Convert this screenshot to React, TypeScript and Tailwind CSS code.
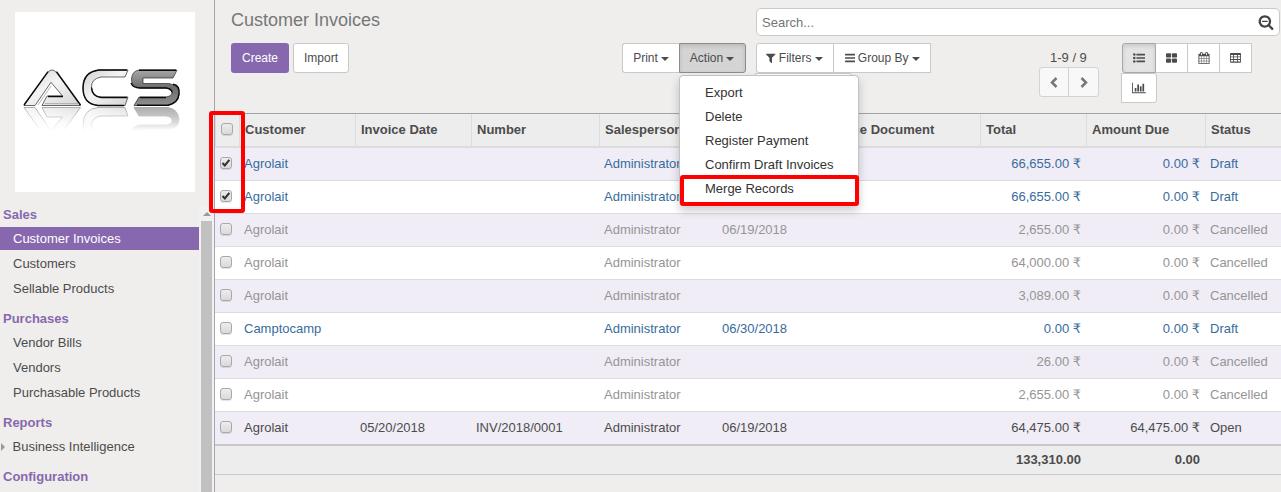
import type { ReactNode } from "react";

const paths = {
  filter:
    "M1403 295q17 41-14 70l-493 493v742q0 42-39 59-13 5-25 5-27 0-45-19l-256-256q-19-19-19-45v-486l-493-493q-31-29-14-70 17-39 59-39h1280q42 0 59 39z",
  calendar:
    "M192 1664h288v-288h-288v288zm352 0h320v-288h-320v288zm-352-352h288v-320h-288v320zm352 0h320v-320h-320v320zm-352-384h288v-288h-288v288zm736 736h320v-288h-320v288zm-384-736h320v-288h-320v288zm768 736h288v-288h-288v288zm-384-352h320v-320h-320v320zm-352-864v-288q0-13-9.5-22.5t-22.5-9.5h-64q-13 0-22.5 9.5t-9.5 22.5v288q0 13 9.5 22.5t22.5 9.5h64q13 0 22.5-9.5t9.5-22.5zm736 864h288v-320h-288v320zm-384-384h320v-288h-320v288zm384 0h288v-288h-288v288zm32-480v-288q0-13-9.5-22.5t-22.5-9.5h-64q-13 0-22.5 9.5t-9.5 22.5v288q0 13 9.5 22.5t22.5 9.5h64q13 0 22.5-9.5t9.5-22.5zm384-64v1280q0 52-38 90t-90 38h-1408q-52 0-90-38t-38-90v-1280q0-52 38-90t90-38h128v-96q0-66 47-113t113-47h64q66 0 113 47t47 113v96h384v-96q0-66 47-113t113-47h64q66 0 113 47t47 113v96h128q52 0 90 38t38 90z",
  chart:
    "M640 896v512h-256v-512h256zm384-512v1024h-256v-1024h256zm1024 1152v128h-2048v-1536h128v1408h1920zm-640-896v768h-256v-768h256zm384-384v1152h-256v-1152h256z",
  searchMinus:
    "M1088 800v64q0 13-9.5 22.5t-22.5 9.5h-576q-13 0-22.5-9.5t-9.5-22.5v-64q0-13 9.5-22.5t22.5-9.5h576q13 0 22.5 9.5t9.5 22.5zm128 32q0-185-131.5-316.5t-316.5-131.5-316.5 131.5-131.5 316.5 131.5 316.5 316.5 131.5 316.5-131.5 131.5-316.5zm512 832q0 53-37.5 90.5t-90.5 37.5q-54 0-90-38l-343-342q-179 124-399 124-143 0-273.5-55.5t-225-150-150-225-55.5-273.5 55.5-273.5 150-225 225-150 273.5-55.5 273.5 55.5 225 150 150 225 55.5 273.5q0 220-124 399l343 343q37 37 37 90z",
  table:
    "M0 256q0-128 128-128h1408q128 0 128 128v1216q0 128-128 128H128q-128 0-128-128zM128 448v224h352V448zM608 448v224h448V448zM1184 448v224h352V448zM128 800v256h352V800zM608 800v256h448V800zM1184 800v256h352V800zM128 1184v256h352v-256zM608 1184v256h448v-256zM1184 1184v256h352v-256z",
};

function Icon({ d, w, className }: { d: string; w: number; className: string }) {
  return (
    <svg viewBox={`0 0 ${w} 1792`} className={className} fill="currentColor" fillRule="evenodd">
      <path d={d} />
    </svg>
  );
}

function Caret() {
  return (
    <svg viewBox="0 0 8 4" className="ml-[3px] mt-[2px] h-1 w-2 shrink-0" fill="currentColor">
      <path d="M0 0h8L4 4z" />
    </svg>
  );
}

function LogoShapes() {
  return (
    <>
      <path fill="url(#pale)" d="M24 105.500L48 72q4-4 8 0l24.500 33.500H42l5-9.500h15.500L51 82.300 35 105.500z" />
      <path fill="url(#pale)" d="M128 70H99q-16 2-16 18t15 17.500h27l3-8.500h-27q-9-1-9.500-9.500t9.500-10.500h24z" />
      <path fill="url(#dark)" d="M177 70h-38q-7 1-7.500 9t8.500 9h26q6 1 6 4.500t-6 4.500h-27l-5 8.500h34q10-2 11-11t-10-11h-26v-5.500h30z" />
    </>
  );
}

function Logo() {
  return (
    <svg viewBox="15 12 180 180" className="ml-[15px] mt-3 h-[180px] w-[180px] shrink-0 bg-white">
      <defs>
        <linearGradient id="pale" x1="0" x2="1" y1="0" y2="1">
          <stop offset="0" stopColor="#cfcfcf" />
          <stop offset=".45" stopColor="#f4f4f4" />
          <stop offset="1" stopColor="#d4d4d4" />
        </linearGradient>
        <linearGradient id="dark" x1="0" x2="0" y1="0" y2="1">
          <stop offset="0" stopColor="#a8a8a8" />
          <stop offset=".5" stopColor="#6c6c6c" />
          <stop offset="1" stopColor="#8e8e8e" />
        </linearGradient>
        <linearGradient id="fade" gradientUnits="userSpaceOnUse" x1="0" x2="0" y1="106" y2="131">
          <stop offset="0" stopColor="#fff" stopOpacity=".75" />
          <stop offset="1" stopColor="#fff" stopOpacity="0" />
        </linearGradient>
        <mask id="fadeMask" maskUnits="userSpaceOnUse" x="15" y="106" width="180" height="25">
          <rect x="15" y="106" width="180" height="25" fill="url(#fade)" />
        </mask>
      </defs>
      <g mask="url(#fadeMask)">
        <g transform="matrix(1 0 0 -1 0 213)" stroke="#777" strokeWidth=".8">
          <LogoShapes />
        </g>
      </g>
      <g stroke="#2a2a2a" strokeWidth=".7" strokeLinejoin="round">
        <LogoShapes />
      </g>
      <path
        d="M24 105L48 71.700M56.500 71.700L80.500 105M63 96.500H48M127 70H99q-16 2-16 18t15 17.500h26M127 97.500h-26q-9-1-9.500-10M176 70.300h-37M131 83q2 5 9 5h26q6 1 6 4.500M166 97.500h-26M137 105.200h31q10-2 11-11t-6-10"
        fill="none"
        stroke="#0a0a0a"
        strokeWidth="1.400"
      />
      <path d="M38 105l13-19M45 103.600h34" fill="none" stroke="#999" strokeWidth=".7" />
    </svg>
  );
}

const menu = [
  { title: "Sales", items: ["Customer Invoices", "Customers", "Sellable Products"] },
  { title: "Purchases", items: ["Vendor Bills", "Vendors", "Purchasable Products"] },
  { title: "Reports", items: ["Business Intelligence"] },
  { title: "Configuration", items: [] },
];

function Sidebar() {
  return (
    <aside className="flex w-[215px] shrink-0 flex-col border-r border-[#a7a5b0]">
      <Logo />
      <div className="mt-[6px] flex min-h-0 flex-1">
        <nav className="w-[199px] shrink-0">
          {menu.map((s) => (
            <section key={s.title}>
              <h2 className="h-[29px] pl-[3px] pt-[5px] font-bold leading-[24px] text-[#8768b0]">{s.title}</h2>
              {s.items.map((it) => (
                <div
                  key={it}
                  className={
                    it === "Customer Invoices"
                      ? "mb-[2px] flex h-[23px] items-center bg-[#8768ae] pl-[13px] text-white"
                      : "mb-[2px] flex h-[23px] items-center pl-[13px]"
                  }
                >
                  {it === "Business Intelligence" && (
                    <svg viewBox="0 0 4 8" className="-ml-[12px] mr-[7.5px] h-2 w-1" fill="#999">
                      <path d="M0 0l4 4-4 4z" />
                    </svg>
                  )}
                  {it}
                </div>
              ))}
            </section>
          ))}
        </nav>
        <div className="mt-2 flex w-[15px] flex-col items-center bg-[#f1f1f1]">
          <svg viewBox="0 0 8 4" className="mb-[5px] mt-[6px] h-1 w-2" fill="#9a9a9a">
            <path d="M4 0l4 4H0z" />
          </svg>
          <div className="w-[11px] flex-1 bg-[#c1c1c1]" />
        </div>
      </div>
    </aside>
  );
}

function Check({ on }: { on?: boolean }) {
  return (
    <span className="flex h-3 w-3 items-center justify-center rounded-[3px] border border-[#a9a9a9] bg-linear-to-b from-[#ededed] to-[#dadada] shadow-[0_1px_0_rgba(0,0,0,0.1)]">
      {on && (
        <svg viewBox="0 0 11 11" className="h-[10px] w-[10px] shrink-0" fill="none" stroke="#333" strokeWidth="2.300">
          <path d="M1.600 5.600l2.600 2.600L9.200 2" />
        </svg>
      )}
    </span>
  );
}

const cols = "grid grid-cols-[25px_116px_116px_128px_118px_100px_163px_106px_119px_75px]";
const heads = ["Customer", "Invoice Date", "Number", "Salesperson", "Due Date", "Source Document", "Total", "Amount Due", "Status"];

type Row = { c: string; inv?: string; no?: string; due?: string; total: string; owed: string; status: string; on?: boolean };
const rows: Row[] = [
  { c: "Agrolait", total: "66,655.00", owed: "0.00", status: "Draft", on: true },
  { c: "Agrolait", total: "66,655.00", owed: "0.00", status: "Draft", on: true },
  { c: "Agrolait", due: "06/19/2018", total: "2,655.00", owed: "0.00", status: "Cancelled" },
  { c: "Agrolait", total: "64,000.00", owed: "0.00", status: "Cancelled" },
  { c: "Agrolait", total: "3,089.00", owed: "0.00", status: "Cancelled" },
  { c: "Camptocamp", due: "06/30/2018", total: "0.00", owed: "0.00", status: "Draft" },
  { c: "Agrolait", total: "26.00", owed: "0.00", status: "Cancelled" },
  { c: "Agrolait", total: "2,655.00", owed: "0.00", status: "Cancelled" },
  { c: "Agrolait", inv: "05/20/2018", no: "INV/2018/0001", due: "06/19/2018", total: "64,475.00", owed: "64,475.00", status: "Open" },
];
const tone: Record<string, string> = {
  Draft: "text-[#386c9d]",
  Cancelled: "text-[#959595]",
  Open: "text-[#4c4c4c]",
};

function Cell({ children }: { children?: ReactNode }) {
  return <div className="whitespace-nowrap pl-1">{children}</div>;
}

function Amount({ value }: { value: string }) {
  return (
    <div className="flex items-baseline justify-end gap-[3.600px] whitespace-nowrap pr-[6px]">
      <span>{value}</span>
      <span className="font-['DejaVu_Sans',sans-serif] leading-none">₹</span>
    </div>
  );
}

function InvoiceTable() {
  return (
    <div className="border-t border-[#a3a3a3]">
      <div className={`${cols} h-[34px] border-b-2 border-[#dcdcdc] bg-[#ededed] font-bold`}>
        <div className="flex items-center border-x border-[#dcdcdc] pb-[2px] pl-[5px]">
          <Check />
        </div>
        {heads.map((h) => (
          <div key={h} className="flex items-center whitespace-nowrap border-r border-[#dcdcdc] pl-[5px] last:border-r-0">
            {h}
          </div>
        ))}
      </div>
      {rows.map((r, i) => (
        <div
          key={i}
          className={`${cols} items-center ${i === 8 ? "h-8" : "h-[33px] border-b border-[#dcdcdc]"} ${i % 2 ? "bg-white" : "bg-[#f0edf7]"} ${tone[r.status]}`}
        >
          <div className="pb-[2px] pl-[5px]">
            <Check on={r.on} />
          </div>
          <Cell>{r.c}</Cell>
          <Cell>{r.inv}</Cell>
          <Cell>{r.no}</Cell>
          <Cell>Administrator</Cell>
          <Cell>{r.due}</Cell>
          <Cell />
          <Amount value={r.total} />
          <Amount value={r.owed} />
          <Cell>{r.status}</Cell>
        </div>
      ))}
      <div className={`${cols} h-[31px] items-center border-b border-t-2 border-b-[#c8c8c8] border-t-[#c8c8c8] bg-[#ededed] font-bold`}>
        <div className="col-span-8 pr-[6px] text-right">133,310.00</div>
        <div className="pr-[6px] text-right">0.00</div>
      </div>
    </div>
  );
}

function ViewSwitcher() {
  const box = "flex h-[30px] items-center justify-center border border-[#c9c9c9] bg-white";
  return (
    <div className="w-[131px]">
      <div className="ml-px flex">
        <div className="flex h-[30px] w-[34px] items-center justify-center rounded-l-[3px] border border-[#a8a8a8] bg-[#e4e4e4] shadow-[inset_0_2px_4px_rgba(0,0,0,0.12)]">
          <svg viewBox="0 0 1792 1792" className="h-3 w-3" fill="currentColor">
            {[384, 896, 1408].map((y) => (
              <g key={y}>
                <circle cx="192" cy={y} r="192" />
                <rect x="512" y={y - 128} width="1280" height="256" rx="32" />
              </g>
            ))}
          </svg>
        </div>
        <div className={`${box} w-8 border-l-0`}>
          <svg viewBox="0 0 1664 1792" className="h-3 w-[11px]" fill="currentColor">
            <rect x="0" y="192" width="768" height="640" rx="128" />
            <rect x="896" y="192" width="768" height="640" rx="128" />
            <rect x="0" y="960" width="768" height="640" rx="128" />
            <rect x="896" y="960" width="768" height="640" rx="128" />
          </svg>
        </div>
        <div className={`${box} w-8 border-l-0`}>
          <Icon d={paths.calendar} w={1792} className="h-3 w-3" />
        </div>
        <div className={`${box} w-8 border-l-0`}>
          <Icon d={paths.table} w={1664} className="h-3 w-[11px]" />
        </div>
      </div>
      <div className={`${box} w-9 rounded-r-[3px]`}>
        <Icon d={paths.chart} w={2048} className="h-3 w-[14px]" />
      </div>
    </div>
  );
}

function ControlPanel() {
  return (
    <div className="h-[113px]">
      <div className="flex h-[43px] items-start">
        <h1 className="ml-4 mt-[7px] w-[525px] text-[18px] leading-[26px] text-[#777]">Customer Invoices</h1>
        <div className="mt-2 flex h-7 w-[524px] items-center justify-between rounded-[5px] border border-[#c9c9c9] bg-white pl-[5px] pr-[5px] text-[#757575]">
          <span className="pt-px">Search...</span>
          <Icon d={paths.searchMinus} w={1792} className="h-4 w-4 text-[#444]" />
        </div>
      </div>
      <div className="flex items-start text-[12px]">
        <button className="ml-4 h-[30px] w-[58px] rounded-[3px] bg-[#8768ae] text-white">Create</button>
        <button className="ml-1 h-[30px] w-14 rounded-[3px] border border-[#c9c9c9] bg-white">Import</button>
        <div className="relative ml-[273px] flex">
          <button className="flex h-[30px] w-[57px] items-center justify-center rounded-l-[3px] border border-r-0 border-[#c9c9c9] bg-white">
            Print
            <Caret />
          </button>
          <button className="flex h-[30px] w-[67px] items-center justify-center rounded-r-[3px] border border-[#8c8c8c] bg-[#d4d4d4] pr-px shadow-[inset_0_2px_4px_rgba(0,0,0,0.125)]">
            Action
            <Caret />
          </button>
          <ul className="absolute left-[57px] top-8 z-20 h-[131px] w-[180px] rounded-[4px] border border-[#c2c2c2] bg-white pt-[5px] text-[13px] text-[#333] shadow-[0_5px_10px_rgba(0,0,0,0.2)]">
            {["Export", "Delete", "Register Payment", "Confirm Draft Invoices", "Merge Records"].map((t) => (
              <li key={t} className="h-6 whitespace-nowrap pl-[25px] leading-6">
                {t}
              </li>
            ))}
          </ul>
          <div className="absolute left-[58px] top-[132px] z-30 h-[31px] w-[179px] rounded-[3px] border-4 border-[#fe0000]" />
        </div>
        <div className="relative ml-[10px] flex">
          <button className="flex h-[30px] w-[78px] items-center justify-center rounded-l-[3px] border border-[#c9c9c9] bg-white pr-px">
            <Icon d={paths.filter} w={1408} className="mr-[3px] h-3 w-[9.4px]" />
            Filters
            <Caret />
          </button>
          <button className="flex h-[30px] w-[97px] items-center justify-center border border-l-0 border-[#c9c9c9] bg-white">
            <svg viewBox="0 0 1536 1792" className="mr-[3px] h-3 w-[10.3px]" fill="currentColor">
              <rect y="256" width="1536" height="256" rx="64" />
              <rect y="768" width="1536" height="256" rx="64" />
              <rect y="1280" width="1536" height="256" rx="64" />
            </svg>
            Group By
            <Caret />
          </button>
          <div className="absolute -left-px top-[30px] z-10 h-3 w-[97px] rounded-r-[3px] border border-[#c9c9c9] bg-white" />
        </div>
        <div className="ml-[108px] w-[60px]">
          <div className="h-6 pl-[11px] pt-[1px] text-[13px] leading-[27px]">1-9 / 9</div>
          <div className="flex h-[30px] rounded-[3px] border border-[#d3d3d3] bg-[#f8f8f8] text-[#777]">
            <span className="flex w-[29px] items-center justify-center border-r border-[#d3d3d3]">
              <svg viewBox="0 0 8 11" className="h-[11px] w-2" fill="none" stroke="currentColor" strokeWidth="2.500">
                <path d="M6.500 1L2 5.500 6.500 10" />
              </svg>
            </span>
            <span className="flex w-[29px] items-center justify-center">
              <svg viewBox="0 0 8 11" className="h-[11px] w-2" fill="none" stroke="currentColor" strokeWidth="2.500">
                <path d="M1.500 1L6 5.500 1.500 10" />
              </svg>
            </span>
          </div>
        </div>
        <div className="ml-[22px]">
          <ViewSwitcher />
        </div>
      </div>
    </div>
  );
}

export default function App() {
  return (
    <div className="relative flex h-[492px] w-[1281px] overflow-hidden bg-[#efeeec] font-['Liberation_Sans',Arial,sans-serif] text-[13px] leading-[18px] text-[#4c4c4c]">
      <Sidebar />
      <main className="min-w-0 flex-1">
        <ControlPanel />
        <InvoiceTable />
      </main>
      <div className="absolute left-[209px] top-[111px] h-[102px] w-9 rounded-[3px] border-4 border-[#fe0000]" />
    </div>
  );
}
